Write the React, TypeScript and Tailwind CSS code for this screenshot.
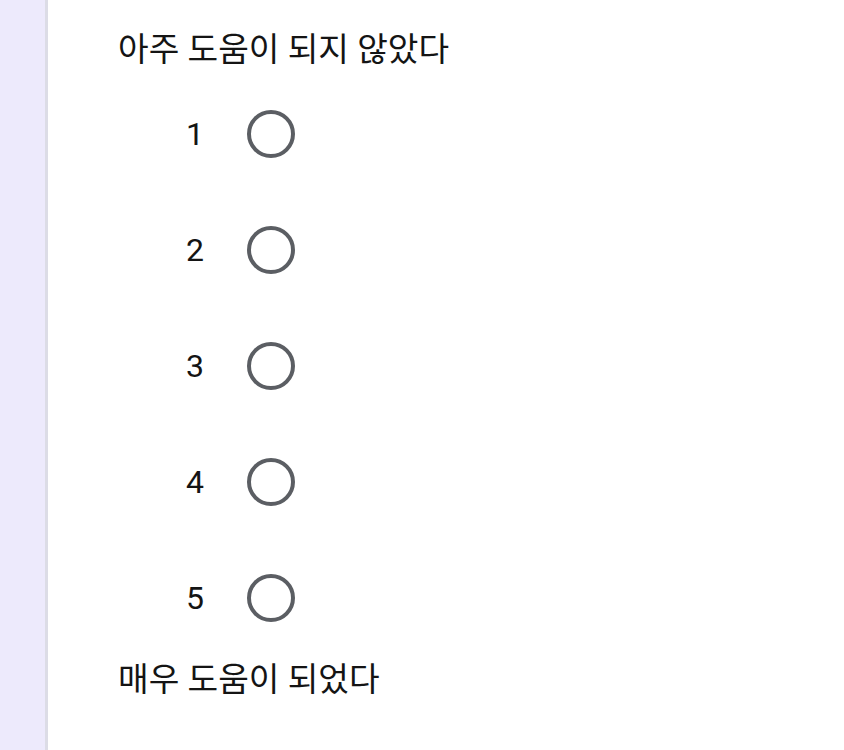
import React from "react";

export default function App() {
  const rows = [1, 2, 3, 4, 5];
  return (
    <div
      className="flex h-[750px] w-[844px] overflow-hidden bg-white text-[#141414]"
      style={{ fontFamily: "Roboto, 'Noto Sans CJK KR', sans-serif" }}
    >
      <div className="w-[45px] shrink-0 bg-[#edeafc]" />
      <div className="w-[3px] shrink-0 bg-[#dcdce6]" />
      <div className="flex flex-1 flex-col pl-[70px] pt-[30px]">
        <div className="text-[33.3px] leading-[40px]">아주 도움이 되지 않았다</div>
        <div className="mt-[6px] flex flex-col">
          {rows.map((n) => (
            <div key={n} className="flex h-[116px] items-center">
              <div className="ml-[62px] w-[30px] text-center text-[32px] leading-[40px]">{n}</div>
              <div className="ml-[37px] h-[48px] w-[48px] rounded-full border-[4px] border-[#5b5e63]" />
            </div>
          ))}
        </div>
        <div className="mt-[4px] text-[33.3px] leading-[40px]">매우 도움이 되었다</div>
      </div>
    </div>
  );
}
